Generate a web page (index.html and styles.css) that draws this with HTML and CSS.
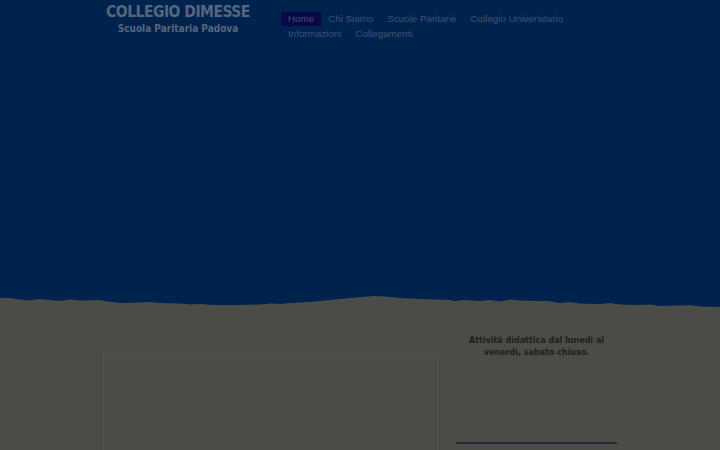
FILE: index.html
```html
<!DOCTYPE html>
<html lang="it">
<head>
<meta charset="utf-8">
<title>Collegio Dimesse</title>
<link rel="stylesheet" href="styles.css">
</head>
<body>
<header class="hero">
  <div class="hero-inner">
    <div class="logo">
      <div class="logo-title">COLLEGIO DIMESSE</div>
      <div class="logo-sub">Scuola Paritaria Padova</div>
    </div>
    <nav class="nav">
      <a class="nav-item active">Home</a>
      <a class="nav-item">Chi Siamo</a>
      <a class="nav-item">Scuole Paritarie</a>
      <a class="nav-item">Collegio Universitario</a>
      <a class="nav-item">Informazioni</a>
      <a class="nav-item">Collegamenti</a>
    </nav>
  </div>
</header>
<svg class="edge" viewBox="0 0 720 14" preserveAspectRatio="none">
  <polygon fill="#00234d" points="0,0 720,0 720,11 700,10.5 690,9 680,9.5 660,10 650,8.5 640,9 620,8.5 610,7 600,8 580,7.5 570,6 560,7 548,5 540,5 520,4.5 510,3.5 500,5.5 490,4 480,5 465,4 455,5 450,4 435,3.5 420,3 410,2.5 400,2 385,0.5 375,0 362,1 345,2.5 330,4 315,5.5 300,6.5 290,7 280,8 270,7.5 260,8.5 240,9 225,9 213,9 200,8 190,8.5 180,7.5 160,7 150,6 140,6.5 120,7 105,5 100,4 80,4.5 70,3.5 60,5 45,3.5 38,3 30,4.5 20,3.5 10,2 0,2"/>
</svg>
<main class="content">
  <div class="inner">
    <section class="box"></section>
    <aside class="side">
      <p class="hours">Attività didattica dal lunedì al venerdì, sabato chiuso.</p>
      <div class="rule"></div>
    </aside>
  </div>
</main>
</body>
</html>
```
FILE: styles.css
```css
html, body {
  margin: 0;
  padding: 0;
  background: #4b4b48;
  height: 450px;
  overflow: hidden;
}
.hero {
  background: #00234d;
  height: 296px;
}
.hero-inner {
  display: flex;
  align-items: flex-start;
  padding-left: 103px;
}
.logo {
  width: 150px;
  text-align: center;
  padding-top: 3px;
  white-space: nowrap;
}
.logo-title {
  font-family: "DejaVu Sans Condensed", "DejaVu Sans", sans-serif;
  font-stretch: condensed;
  font-weight: bold;
  font-size: 15.5px;
  line-height: 19px;
  color: #56667e;
  letter-spacing: -0.5px;
}
.logo-sub {
  font-family: "DejaVu Sans Condensed", "DejaVu Sans", sans-serif;
  font-stretch: condensed;
  font-weight: bold;
  font-size: 10px;
  line-height: 13px;
  color: #56667e;
}
.nav {
  margin-left: 28px;
  margin-top: 12px;
  width: 320px;
  display: flex;
  flex-wrap: wrap;
  align-content: flex-start;
  row-gap: 1px;
}
.nav-item {
  font-family: "Liberation Sans", Arial, sans-serif;
  font-size: 9.8px;
  line-height: 14px;
  color: #3e5274;
  padding: 0 7px;
  white-space: nowrap;
}
.active {
  background: #0b0848;
}
.edge {
  display: block;
  width: 720px;
  height: 14px;
}
.content .inner {
  display: flex;
  padding-left: 103px;
}
.box {
  width: 333px;
  height: 200px;
  margin-top: 42px;
  border: 1px solid #51514e;
}
.side {
  width: 161px;
  margin-left: 18px;
}
.hours {
  margin: 25px 0 0;
  font-family: "DejaVu Sans", Verdana, sans-serif;
  font-weight: bold;
  font-size: 8px;
  line-height: 12px;
  color: #1e1e1e;
  text-align: center;
}
.rule {
  margin-top: 83px;
  height: 2px;
  background: #262a3a;
}
```
